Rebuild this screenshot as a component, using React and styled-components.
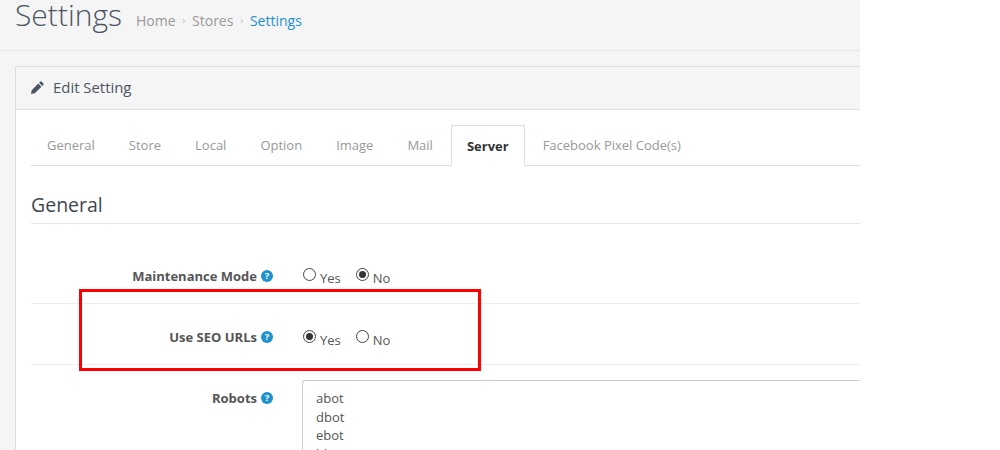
import React from 'react'
import styled, { createGlobalStyle } from 'styled-components'

const GlobalStyle = createGlobalStyle`
  html, body {
    margin: 0;
    height: 450px;
    overflow: hidden;
    background: #fff;
  }
  * { box-sizing: border-box; }
`

const Page = styled.div`
  position: relative;
  width: 860px;
  height: 450px;
  overflow: hidden;
  background: #f5f5f5;
  font-family: "Open Sans", sans-serif;
  font-size: 13px;
  color: #555;
`

const PageHeader = styled.header`
  height: 51px;
  display: flex;
  align-items: flex-start;
  padding-left: 15px;
  border-bottom: 1px solid #e7e7e7;
`

const PageTitle = styled.h1`
  margin: -6px 0 0;
  font-size: 30px;
  line-height: 41px;
  font-weight: 300;
  color: #4b5563;
`

const Breadcrumb = styled.div`
  display: flex;
  align-items: center;
  height: 20px;
  margin: 10px 0 0 14px;
  font-size: 14px;
  color: #999;
`

const Crumb = styled.span`
  color: ${p => (p.$active ? '#1e91cf' : '#999')};
`

const CrumbSep = styled.span`
  width: 16.5px;
  text-align: center;
  font-size: 10px;
  color: #bbb;
`

const Panel = styled.section`
  margin: 15px 0 0 15px;
  width: 860px;
  height: 400px;
  background: #fff;
  border: 1px solid #ddd;
  border-right: none;
  border-bottom: none;
`

const PanelHeading = styled.div`
  height: 43px;
  display: flex;
  align-items: center;
  gap: 9px;
  padding: 0 0 2px 15px;
  background: #f5f5f5;
  border-bottom: 1px solid #ddd;
  font-size: 14.9px;
  color: #4b5563;
`

const PanelBody = styled.div`
  padding: 15px 0 0 15px;
`

const Tabs = styled.nav`
  display: flex;
  height: 41px;
  border-bottom: 1px solid #ddd;
`

const Tab = styled.a`
  height: ${p => (p.$active ? '41px' : '40px')};
  margin-left: ${p => (p.$active ? '1px' : '0')};
  padding: 0 ${p => (p.$active ? '15px' : '17px')};
  display: flex;
  align-items: center;
  font-size: 13px;
  font-weight: ${p => (p.$active ? 700 : 400)};
  color: ${p => (p.$active ? '#333' : '#999')};
  background: #fff;
  border: ${p => (p.$active ? '1px solid #ddd' : 'none')};
  border-bottom: ${p => (p.$active ? '1px solid #fff' : 'none')};

  &:first-child {
    padding-left: 16px;
  }

  &:last-child {
    margin-left: 1px;
  }
`

const Legend = styled.h2`
  margin: 0;
  height: 58px;
  padding-top: 25px;
  font-size: 19.5px;
  line-height: 28px;
  font-weight: 400;
  color: #3f4854;
  border-bottom: 1px solid #e5e5e5;
`

const FormRow = styled.div`
  display: grid;
  grid-template-columns: 242px 1fr;
  align-items: start;
  height: ${p => p.$height}px;
  padding-top: ${p => p.$top}px;
  border-bottom: ${p => (p.$plain ? 'none' : '1px solid #ededed')};
`

const Label = styled.label`
  display: flex;
  justify-content: flex-end;
  align-items: center;
  gap: 4px;
  height: 18px;
  margin-top: ${p => p.$offset || 0}px;
  font-size: 13px;
  font-weight: 700;
  color: #555;
`

const HelpIcon = styled.span`
  width: 12px;
  height: 12px;
  border-radius: 50%;
  background: #1e91cf;
  color: #fff;
  font-size: 9.5px;
  font-weight: 700;
  line-height: 12px;
  text-align: center;
`

const Radios = styled.div`
  display: flex;
  gap: 15px;
  padding-left: 30px;
  margin-top: ${p => p.$offset || 0}px;
`

const RadioLabel = styled.span`
  display: flex;
  align-items: flex-start;
  gap: 4px;
  height: 20px;
  font-size: 13px;
  line-height: 18px;
  color: #555;
`

const RadioText = styled.span`
  margin-top: 2px;
`

const RadioDot = styled.span`
  width: 13px;
  height: 13px;
  margin-top: 1px;
  border-radius: 50%;
  border: 1px solid #444;
  background: #fff;
  display: flex;
  align-items: center;
  justify-content: center;

  &::after {
    content: '';
    display: ${p => (p.$checked ? 'block' : 'none')};
    width: 7px;
    height: 7px;
    border-radius: 50%;
    background: #333;
  }
`

const RobotsBox = styled.div`
  margin-left: 29px;
  height: 90px;
  padding: 8px 13px;
  border: 1px solid #ccc;
  border-right: none;
  border-bottom: none;
  border-radius: 3px 0 0 0;
  font-size: 13px;
  line-height: 18.6px;
  color: #555;
`

// the annotation drawn on top of the screenshot
const Highlight = styled.div`
  position: absolute;
  left: 79px;
  top: 289px;
  width: 402px;
  height: 82px;
  border: 3px solid #f00;
`

const tabs = ['General', 'Store', 'Local', 'Option', 'Image', 'Mail']

function PencilIcon() {
  return (
    <svg width="13" height="13" viewBox="0 0 13 13">
      <path d="M9.3.6a.9.9 0 0 1 1.2 0l1.9 1.9a.9.9 0 0 1 0 1.2l-1.2 1.2-3.1-3.1zM7.3 2.6l3.1 3.1-6.6 6.6-3.8.7.7-3.8z" fill="#4b5563" />
    </svg>
  )
}

function Radio({ label, checked }) {
  return (
    <RadioLabel>
      <RadioDot $checked={checked} />
      <RadioText>{label}</RadioText>
    </RadioLabel>
  )
}

function App() {
  return (
    <Page>
      <GlobalStyle />
      <PageHeader>
        <PageTitle>Settings</PageTitle>
        <Breadcrumb>
          <Crumb>Home</Crumb>
          <CrumbSep>›</CrumbSep>
          <Crumb>Stores</Crumb>
          <CrumbSep>›</CrumbSep>
          <Crumb $active>Settings</Crumb>
        </Breadcrumb>
      </PageHeader>
      <Panel>
        <PanelHeading>
          <PencilIcon />
          Edit Setting
        </PanelHeading>
        <PanelBody>
          <Tabs>
            {tabs.map(t => <Tab key={t}>{t}</Tab>)}
            <Tab $active>Server</Tab>
            <Tab>Facebook Pixel Code(s)</Tab>
          </Tabs>
          <Legend>General</Legend>
          <FormRow $height={80} $top={43}>
            <Label>Maintenance Mode <HelpIcon>?</HelpIcon></Label>
            <Radios>
              <Radio label="Yes" />
              <Radio label="No" checked />
            </Radios>
          </FormRow>
          <FormRow $height={61} $top={24}>
            <Label>Use SEO URLs <HelpIcon>?</HelpIcon></Label>
            <Radios $offset={1}>
              <Radio label="Yes" checked />
              <Radio label="No" />
            </Radios>
          </FormRow>
          <FormRow $height={90} $top={15} $plain>
            <Label $offset={9}>Robots <HelpIcon>?</HelpIcon></Label>
            <RobotsBox>
              abot<br />dbot<br />ebot<br />hbot
            </RobotsBox>
          </FormRow>
        </PanelBody>
      </Panel>
      <Highlight />
    </Page>
  )
}

export default App
